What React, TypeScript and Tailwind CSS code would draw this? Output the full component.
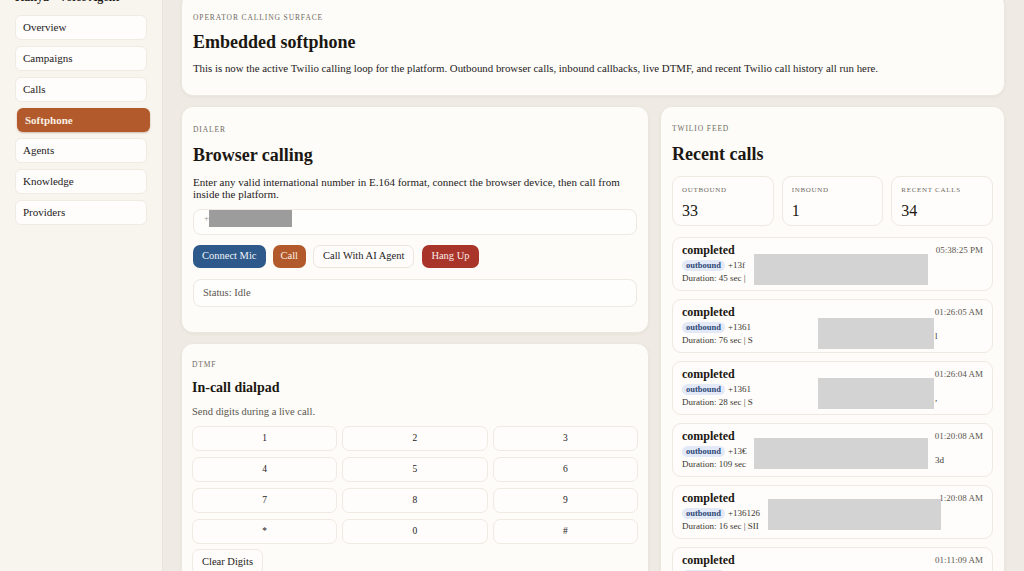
import React from "react";

const serif = { fontFamily: '"Liberation Serif", "DejaVu Serif", serif' };

const navItems = ["Overview", "Campaigns", "Calls", "Softphone", "Agents", "Knowledge", "Providers"];

type CallRow = {
  time: string;
  number: string;
  duration: string;
  mask?: [number, number, number]; // left offset, width, top
  tail?: string;
};

const calls: CallRow[] = [
  { time: "05:38:25 PM", number: "+13f", duration: "Duration: 45 sec |", mask: [81, 174, 16] },
  { time: "01:26:05 AM", number: "+1361", duration: "Duration: 76 sec | S", mask: [145, 116, 18], tail: "l" },
  { time: "01:26:04 AM", number: "+1361", duration: "Duration: 28 sec | S", mask: [145, 116, 16], tail: "," },
  { time: "01:20:08 AM", number: "+13€", duration: "Duration: 109 sec", mask: [81, 174, 14], tail: "3d" },
  { time: "1:20:08 AM", number: "+136126", duration: "Duration: 16 sec | SII", mask: [95, 173, 13] },
  { time: "01:11:09 AM", number: "+1361", duration: "Duration: 12 sec |" },
];

function Label({ children }: { children: React.ReactNode }) {
  return (
    <div className="text-[7.5px] uppercase tracking-[0.12em] text-[#6f6a62]">{children}</div>
  );
}

function Sidebar() {
  return (
    <aside className="w-[163px] shrink-0 border-r border-[#ebe5db] bg-[#f8f5ef] px-[15px]">
      <div className="h-[13px] -mt-[9px] text-[12px] font-bold leading-[13px] text-[#1f1b16]">
        Kaliya · Voice Agent
      </div>
      <nav className="mt-[11px] flex flex-col gap-[6px]">
        {navItems.map((item) =>
          item === "Softphone" ? (
            <div
              key={item}
              className="ml-[2px] flex h-[24px] w-[133px] items-center rounded-[6px] bg-[#b25a2b] px-[8px] text-[11px] font-bold text-[#fbeee2] shadow-[0_1px_2px_rgba(120,50,10,0.3)]"
            >
              {item}
            </div>
          ) : (
            <div
              key={item}
              className="flex h-[25px] w-[132px] items-center rounded-[6px] border border-[#efeae2] bg-[#fefdfb] px-[7px] text-[11px] text-[#25211c]"
            >
              {item}
            </div>
          )
        )}
      </nav>
    </aside>
  );
}

function Card({ children, className = "" }: { children: React.ReactNode; className?: string }) {
  return (
    <section
      className={`rounded-[12px] border border-[#ece7de] bg-[#fdfcf8] shadow-[0_1px_3px_rgba(90,70,40,0.06)] ${className}`}
    >
      {children}
    </section>
  );
}

function Dialer() {
  return (
    <Card className="px-[11px] pt-[17px] pb-[25px]">
      <Label>Dialer</Label>
      <h2 className="mt-[9px] text-[18px] font-bold leading-[20px] text-[#1b1712]">Browser calling</h2>
      <p className="mt-[11px] text-[11px] leading-[12px] text-[#25211c]">
        Enter any valid international number in E.164 format, connect the browser device, then call from inside the
        platform.
      </p>
      <div className="mt-[9px] flex h-[26px] items-start rounded-[8px] border border-[#eee9e1] bg-[#fefefc] pl-[10px]">
        <span className="text-[9px] leading-[16px] text-[#9a958d]">+</span>
        <span className="h-[17px] w-[83px] bg-[#9c9c9c]" />
      </div>
      <div className="mt-[10px] flex gap-[7px] text-[10.5px]">
        <button className="h-[23px] rounded-[7px] bg-[#2d5a8b] px-[9px] text-[#f1f4f8]">Connect Mic</button>
        <button className="h-[23px] rounded-[7px] bg-[#b25a2b] px-[8px] text-[#fbefe4]">Call</button>
        <button className="h-[23px] rounded-[7px] border border-[#ebe6de] bg-[#fefdfb] px-[9px] text-[#25211c]">
          Call With AI Agent
        </button>
        <button className="ml-[1px] h-[23px] rounded-[7px] bg-[#a8342a] px-[9px] text-[#fbe9e4]">Hang Up</button>
      </div>
      <div className="mt-[11px] flex h-[28px] items-center rounded-[8px] border border-[#eee9e1] bg-[#fefefc] px-[9px] text-[10.5px] text-[#5b564f]">
        Status: Idle
      </div>
    </Card>
  );
}

function Dialpad() {
  const keys = ["1", "2", "3", "4", "5", "6", "7", "8", "9", "*", "0", "#"];
  return (
    <Card className="px-[10px] pt-[15px] pb-[20px]">
      <Label>DTMF</Label>
      <h3 className="mt-[10px] text-[14px] font-bold leading-[16px] text-[#1b1712]">In-call dialpad</h3>
      <p className="mt-[10px] text-[10.5px] leading-[12px] text-[#5b564f]">Send digits during a live call.</p>
      <div className="mt-[8px] grid grid-cols-3 gap-x-[5px] gap-y-[6px]">
        {keys.map((k) => (
          <button
            key={k}
            className="h-[25px] rounded-[7px] border border-[#efeae2] bg-[#fefdfb] text-[9.5px] text-[#25211c]"
          >
            {k}
          </button>
        ))}
      </div>
      <button className="mt-[5px] h-[26px] rounded-[7px] border border-[#efeae2] bg-[#fefdfb] px-[9px] text-[10.5px] text-[#25211c]">
        Clear Digits
      </button>
    </Card>
  );
}

function Stat({ label, value }: { label: string; value: string }) {
  return (
    <div className="h-[50px] rounded-[9px] border border-[#eee9e1] bg-[#fefdfb] px-[9px] pt-[8px]">
      <div className="text-[7px] uppercase tracking-[0.1em] text-[#6f6a62]">{label}</div>
      <div className="mt-[7px] text-[16px] leading-[17px] text-[#1b1712]">{value}</div>
    </div>
  );
}

function RecentCalls() {
  return (
    <Card className="px-[11px] pt-[16px] pb-[20px]">
      <Label>Twilio feed</Label>
      <h2 className="mt-[9px] text-[18px] font-bold leading-[20px] text-[#1b1712]">Recent calls</h2>
      <div className="mt-[12px] grid grid-cols-3 gap-[8px]">
        <Stat label="Outbound" value="33" />
        <Stat label="Inbound" value="1" />
        <Stat label="Recent calls" value="34" />
      </div>
      <div className="mt-[11px] flex flex-col gap-[8px]">
        {calls.map((c, i) => (
          <div
            key={i}
            className="relative h-[54px] rounded-[9px] border border-[#eee9e1] bg-[#fefdfb] px-[9px] pt-[5px]"
          >
            <div className="flex items-start justify-between">
              <span className="text-[12px] font-bold leading-[14px] text-[#1b1712]">completed</span>
              <span className="pt-[1px] text-[9px] text-[#5b564f]">{c.time}</span>
            </div>
            <div className="mt-[2px] flex items-center gap-[3px] text-[9px] text-[#3b362f]">
              <span className="rounded-full bg-[#e3e9f6] px-[4px] text-[8.5px] font-bold leading-[11px] text-[#2c4877]">
                outbound
              </span>
              <span>{c.number}</span>
            </div>
            <div className="text-[9px] leading-[10px] text-[#3b362f]">{c.duration}</div>
            {c.tail && (
              <span className="absolute left-[262px] top-[30px] text-[9px] text-[#3b362f]">{c.tail}</span>
            )}
            {c.mask && (
              <div
                className="absolute h-[31px] bg-[#d3d3d3]"
                style={{ left: c.mask[0], width: c.mask[1], top: c.mask[2] }}
              />
            )}
          </div>
        ))}
      </div>
    </Card>
  );
}

export default function App() {
  return (
    <div className="h-[571px] w-[1024px] overflow-hidden bg-[#efebe4]" style={serif}>
      <div className="flex min-h-[700px]">
        <Sidebar />
        <main className="flex-1 pl-[18px] pr-[19px]">
          <div className="-mt-[7px] flex flex-col gap-[10px]">
            <Card className="px-[11px] pt-[18px] pb-[21px]">
              <Label>Operator calling surface</Label>
              <h1 className="mt-[9px] text-[18px] font-bold leading-[20px] text-[#1b1712]">Embedded softphone</h1>
              <p className="mt-[10px] text-[10.85px] leading-[12px] text-[#25211c]">
                This is now the active Twilio calling loop for the platform. Outbound browser calls, inbound callbacks,
                live DTMF, and recent Twilio call history all run here.
              </p>
            </Card>
            <div className="grid grid-cols-[468px_1fr] items-start gap-[11px]">
              <div className="flex flex-col gap-[10px]">
                <Dialer />
                <Dialpad />
              </div>
              <RecentCalls />
            </div>
          </div>
        </main>
      </div>
    </div>
  );
}
